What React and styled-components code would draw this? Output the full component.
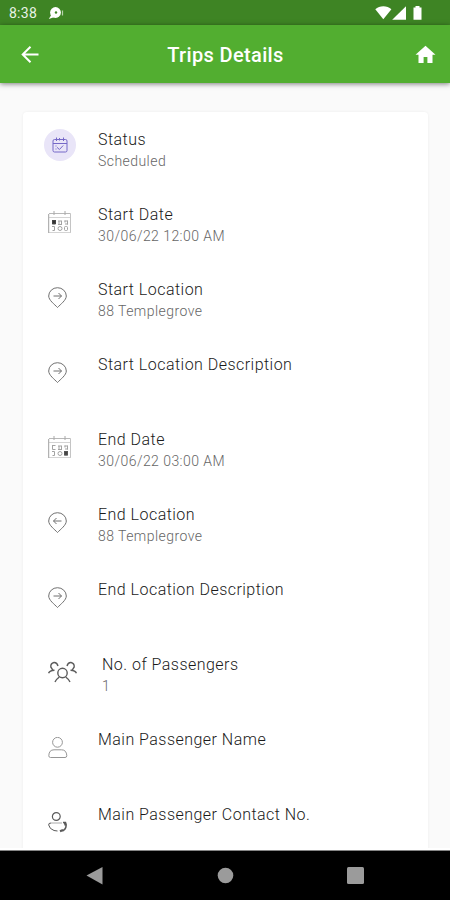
import React from "react";
import styled, { createGlobalStyle } from "styled-components";

const App = () => {
  return (
    <Screen>
      <GlobalStyle />
      <StatusBar>
        <Clock>8:38</Clock>
        <NotificationIcon />
        <StatusIcons />
      </StatusBar>
      <AppBar>
        <BackIcon />
        <Title>Trips Details</Title>
        <HomeIcon />
      </AppBar>
      <Content>
        <Card>
          {rows.map(row => (
            <Row key={row.label}>
              <IconSlot $badge={row.badge}>{row.icon}</IconSlot>
              <Texts $shift={row.shift}>
                <Label>{row.label}</Label>
                {row.value && <Value>{row.value}</Value>}
              </Texts>
            </Row>
          ))}
        </Card>
      </Content>
      <NavBar>
        <NavIcons />
      </NavBar>
    </Screen>
  );
};

const GlobalStyle = createGlobalStyle`
  * {
    box-sizing: border-box;
  }
  body {
    margin: 0;
    background: #fafafa;
    font-family: Roboto, "Liberation Sans", sans-serif;
  }
  svg {
    display: block;
    flex: none;
  }
`;

const Screen = styled.div`
  display: flex;
  flex-direction: column;
  width: 450px;
  height: 900px;
  overflow: hidden;
`;

const StatusBar = styled.div`
  display: flex;
  align-items: center;
  height: 25px;
  flex: none;
  padding: 1px 27px 0 9px;
  background: #3e8424;
`;

const Clock = styled.span`
  width: 39px;
  color: #e9f3e6;
  font-size: 14px;
  letter-spacing: 0.25px;
`;

const AppBar = styled.header`
  display: flex;
  align-items: center;
  justify-content: space-between;
  height: 58px;
  flex: none;
  padding: 0 14px 0 20px;
  background: #52ae30;
  box-shadow: 0 1px 5px rgba(0, 0, 0, 0.5);
  z-index: 1;
`;

const Title = styled.h1`
  margin: 2px 3px 0 0;
  color: #fff;
  font-size: 20px;
  font-weight: 500;
  letter-spacing: 0.35px;
`;

const Content = styled.main`
  flex: 1;
  min-height: 0;
  overflow: hidden;
  padding: 29px 22px 0 23px;
  border-bottom: 2px solid #fff;
`;

const Card = styled.section`
  height: 900px;
  background: #fff;
  border-radius: 4px;
  box-shadow: 0 0 3px rgba(0, 0, 0, 0.06);
`;

const Row = styled.div`
  display: flex;
  height: 75px;
  padding: 17px 0 0 21px;
`;

const IconSlot = styled.div`
  display: flex;
  align-items: center;
  justify-content: ${props => (props.$badge ? "center" : "flex-start")};
  width: 32px;
  height: 32px;
  flex: none;
  margin-right: 22px;
  padding-left: ${props => (props.$badge ? "0" : "4px")};
  padding-top: ${props => (props.$badge ? "0" : "5px")};
  border-radius: 50%;
  background: ${props => (props.$badge ? "#e9e5f8" : "none")};
`;

const Texts = styled.div`
  padding-left: ${props => props.$shift || 0}px;
`;

const Label = styled.div`
  color: #1a1a1a;
  font-size: 16px;
  font-weight: 300;
  line-height: 22px;
  letter-spacing: 0.47px;
  white-space: nowrap;
`;

const Value = styled.div`
  color: #666;
  font-size: 14px;
  font-weight: 300;
  line-height: 21px;
  letter-spacing: 0.45px;
  white-space: nowrap;
`;

const NavBar = styled.nav`
  height: 50px;
  flex: none;
  background: #000;
  border-top: 1px solid #858585;
`;

const NotificationIcon = () => (
  <svg width="16" height="14" viewBox="0 0 16 14">
    <circle cx="7.5" cy="6.5" r="5.4" fill="#fff" />
    <path d="M3.5 8.5 0.8 13 6 11.3Z" fill="#fff" />
    <circle cx="8" cy="6.5" r="1.2" fill="#3e8424" />
    <path d="M14.5 4.5v5" stroke="#b5d1aa" strokeWidth="1.2" />
  </svg>
);

const StatusIcons = () => (
  <StatusSvg width="48" height="16" viewBox="0 0 48 16" fill="#fff">
    <path d="M0.3 4.2C4.5 0.3 12.2 0.3 16.4 4.2L8.3 14.3Z" />
    <path d="M31 1.2v13.6H17.2Z" />
    <path d="M38.5 2.6h2V1h4v1.6h2v12.2h-8Z" />
  </StatusSvg>
);

const StatusSvg = styled.svg`
  margin-left: auto;
`;

const BackIcon = () => (
  <svg width="20" height="20" viewBox="0 0 20 20">
    <path
      d="M18.5 10.5H3.5M10.5 2.7 2.7 10.5l7.8 7.8"
      fill="none"
      stroke="#fff"
      strokeWidth="2"
    />
  </svg>
);

const HomeIcon = () => (
  <svg width="22" height="20" viewBox="0 0 22 20" fill="#fff">
    <path d="M11.5 1.7 1.5 10.7h3v8.3h5.1v-6h3.8v6h5.1v-8.3h3Z" />
  </svg>
);

const NavIcons = () => (
  <svg width="450" height="49" viewBox="0 0 450 49" fill="#9b9b9b">
    <path d="M86.5 24.5 102.5 16v17.5Z" />
    <circle cx="225.5" cy="24.5" r="7.8" />
    <rect x="347" y="16" width="17" height="17" rx="1.5" />
  </svg>
);

const ScheduledIcon = () => (
  <svg width="16" height="16" viewBox="0 0 16 16" fill="none" stroke="#7568c8">
    <rect x="1" y="2.5" width="14" height="12.5" rx="1.5" />
    <path d="M1 6.5h14M4.5 0.5v3.5M7.5 1v2.5M11.5 0.5v3.5" />
    <path d="M5 10.3l2.4 2.2 3.8-4M3.5 9h1M3.5 12h1" />
  </svg>
);

// the filled day is the first cell for a start date, the last for an end date
const CalendarIcon = ({ end }) => (
  <svg width="24" height="24" viewBox="0 0 24 24" fill="none" stroke="#a3a3a3">
    <path d="M1 2.5H22.5" stroke="#b8b8b8" />
    <path d="M22.5 2.5V22" stroke="#c4c4c4" />
    <path d="M1 6.5H22M1 21.5H22.5" stroke="#d4d4d4" />
    <path d="M6 0v4M17 0v4" stroke="#a8a8a8" />
    <path d="M0.7 3V22" stroke="#a0a0a0" />
    <path d="M4.5 9v4.5M4.5 9.5h3M4.5 13.5h3M10 10h4M10 13.5h4M11 10v3M13.5 10v3M16.5 10h3M17 13h3M19.5 9.500v4M17 9.500v2" />
    <path d="M4 15.5h2.500M6.500 15.500v4M4.500 19.500h2" />
    <rect x="10" y="15.5" width="4" height="4" rx="2" />
    <rect x="16.5" y="15.5" width="3" height="4" rx="1" />
    {end ? (
      <rect x="16.5" y="15.5" width="3" height="3.5" fill="#444" stroke="#555" />
    ) : (
      <rect x="4.5" y="9.5" width="3" height="3" fill="#333" stroke="#444" />
    )}
  </svg>
);

const PinIcon = ({ back }) => (
  <svg width="20" height="22" viewBox="0 0 20 22" fill="none" stroke="#707070">
    <path d="M9.5 20.5C6.5 17.3 0.7 13.2 0.7 9A8.8 8.3 0 0 1 18.3 9C18.3 13.2 12.5 17.3 9.5 20.5Z" />
    <path
      d={
        back
          ? "M13.5 9H5.5M8.5 6l-3 3 3 3"
          : "M5.5 9h8M10.5 6l3 3-3 3"
      }
    />
  </svg>
);

const GroupIcon = () => (
  <svg
    width="30"
    height="24"
    viewBox="0 0 30 24"
    fill="none"
    stroke="#5c5c5c"
    strokeWidth="1.4"
  >
    <circle cx="14.5" cy="12" r="4.7" />
    <path d="M7 21Q8.5 18 11.300 16M22 21Q20.500 18 17.700 16" />
    <path d="M10 5Q9 1.300 6 1.500 2.500 2.300 2.800 6L5 9.300" />
    <path d="M19 5Q20 1.300 23 1.500 26.500 2.300 26.200 6L24 9.300" />
    <path d="M0.600 12.200Q1.500 9.500 6.500 9.300M28.400 12.200Q27.500 9.500 22.500 9.300" />
  </svg>
);

const PersonIcon = () => (
  <svg width="20" height="22" viewBox="0 0 20 22" fill="none" stroke="#969696">
    <circle cx="9.500" cy="5.300" r="4.900" />
    <path d="M2.500 20.500H17Q18.800 20.500 18.800 18.700 18.500 12.800 13.500 12.800H6Q1 12.800 0.800 18.700 0.800 20.500 2.500 20.500Z" />
  </svg>
);

const ContactIcon = () => (
  <svg width="20" height="22" viewBox="0 0 20 22" fill="none" stroke="#5a5a5a">
    <circle cx="8.300" cy="4.500" r="3.900" strokeWidth="1.200" />
    <path d="M3 11H14" stroke="#aaa" />
    <path d="M3 11Q0.300 11 0.700 13 1.500 17 6 18.500L9.500 19" />
    <path d="M15 10.500h2.500Q19.500 16.500 14.500 19" strokeWidth="1.500" />
    <path d="M16.700 10.500l1 3M12 19.300l3-1.300" strokeWidth="2.200" />
  </svg>
);

const rows = [
  { label: "Status", value: "Scheduled", icon: <ScheduledIcon />, badge: true },
  { label: "Start Date", value: "30/06/22 12:00 AM", icon: <CalendarIcon /> },
  { label: "Start Location", value: "88 Templegrove", icon: <PinIcon /> },
  { label: "Start Location Description", icon: <PinIcon /> },
  { label: "End Date", value: "30/06/22 03:00 AM", icon: <CalendarIcon end /> },
  { label: "End Location", value: "88 Templegrove", icon: <PinIcon back /> },
  { label: "End Location Description", icon: <PinIcon /> },
  { label: "No. of Passengers", value: "1", icon: <GroupIcon />, shift: 4 },
  { label: "Main Passenger Name", icon: <PersonIcon /> },
  { label: "Main Passenger Contact No.", icon: <ContactIcon /> }
];

export default App;
